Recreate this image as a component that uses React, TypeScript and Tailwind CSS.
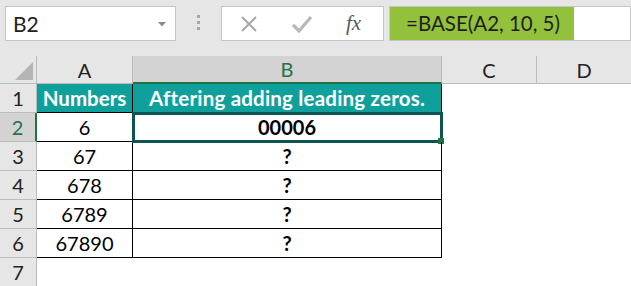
const font = { fontFamily: "Lato, 'Open Sans', sans-serif" };

const rows = [
  { a: "6", b: "00006" },
  { a: "67", b: "?" },
  { a: "678", b: "?" },
  { a: "6789", b: "?" },
  { a: "67890", b: "?" },
];

function FormulaBar() {
  return (
    <div className="flex h-[56px] items-start bg-[#e6e6e6] pt-[6px]">
      {/* name box */}
      <div className="ml-[5px] flex h-[35px] w-[171px] items-center justify-between border border-[#c6c6c6] bg-white pl-[7px] pr-[9px]">
        <span className="text-[21px] text-[#222]">B2</span>
        <svg width="8" height="5" viewBox="0 0 8 5" className="mt-[1px]">
          <path d="M0 0 H8 L4 4.5 Z" fill="#8a8a8a" />
        </svg>
      </div>
      <div className="flex w-[45px] flex-col items-center gap-[3px] pt-[9px]">
        <span className="h-[3px] w-[3px] bg-[#a6a6a6]" />
        <span className="h-[3px] w-[3px] bg-[#a6a6a6]" />
        <span className="h-[3px] w-[3px] bg-[#a6a6a6]" />
      </div>
      {/* cancel / enter / fx */}
      <div className="flex h-[35px] w-[163px] items-center border border-[#c6c6c6] bg-white">
        <svg width="18" height="18" viewBox="0 0 18 18" className="ml-[18px]">
          <path d="M2 2 L16 16 M16 2 L2 16" stroke="#a8a8a8" strokeWidth="2" />
        </svg>
        <svg width="20" height="18" viewBox="0 0 20 18" className="ml-[34px]">
          <path d="M1 10 L7 16 L19 2" stroke="#b8b8b8" strokeWidth="3.2" fill="none" />
        </svg>
        <span
          className="ml-[34px] text-[21px] italic text-[#5a5a5a]"
          style={{ fontFamily: "'Liberation Serif', serif" }}
        >
          fx
        </span>
      </div>
      <div className="ml-[5px] flex h-[35px] flex-1 border border-[#c6c6c6] bg-white">
        <div className="flex w-[184px] items-center bg-[#93c13c] pl-[16px] text-[20.5px] text-[#1f1f1f]">
          =BASE(A2, 10, 5)
        </div>
      </div>
    </div>
  );
}

export default function App() {
  return (
    <div className="h-[286px] w-[631px] overflow-hidden bg-white" style={font}>
      <FormulaBar />
      <div className="grid grid-cols-[37px_96px_309px_95px_1fr] grid-rows-[28px_29px_29px_29px_29px_29px_29px_29px]">
        {/* column headers */}
        <div className="relative border-r border-b border-[#bcbcbc] bg-[#e6e6e6]">
          <svg width="18" height="18" viewBox="0 0 18 18" className="absolute bottom-[3px] right-[3px]">
            <path d="M18 0 L18 18 L0 18 Z" fill="#b4b4b4" />
          </svg>
        </div>
        <div className="flex items-center justify-center border-r border-b border-[#bcbcbc] bg-[#e6e6e6] text-[20px] text-[#222]">
          A
        </div>
        <div className="flex items-center justify-center border-r border-[#bcbcbc] border-b-2 border-b-[#217346] bg-[#d3d3d3] text-[20px] text-[#217346]">
          B
        </div>
        <div className="flex items-center justify-center border-r border-b border-[#bcbcbc] bg-[#e6e6e6] text-[20px] text-[#222]">
          C
        </div>
        <div className="flex items-center justify-center border-b border-[#bcbcbc] bg-[#e6e6e6] text-[20px] text-[#222]">
          D
        </div>

        {/* row 1 */}
        <div className="flex items-center justify-center border-r border-b border-[#bcbcbc] bg-[#e6e6e6] text-[20px] text-[#222]">
          1
        </div>
        <div className="flex items-center justify-center border-r border-b border-black bg-[#10a09b] text-[20.5px] font-bold text-white">
          Numbers
        </div>
        <div className="flex items-center justify-center border-r border-b border-black bg-[#10a09b] text-[20.5px] font-bold tracking-[0.2px] text-white">
          Aftering adding leading zeros.
        </div>
        <div />
        <div />

        {rows.map((r, i) => {
          const selected = i === 0;
          return (
            <div key={i} className="contents">
              <div
                className={
                  selected
                    ? "flex items-center justify-center border-b border-[#bcbcbc] border-r-2 border-r-[#217346] bg-[#d3d3d3] text-[20px] text-[#217346]"
                    : "flex items-center justify-center border-r border-b border-[#bcbcbc] bg-[#e6e6e6] text-[20px] text-[#222]"
                }
              >
                {i + 2}
              </div>
              <div className="flex items-center justify-center border-r border-b border-black text-[20px] text-black">
                {r.a}
              </div>
              <div className="relative flex items-center justify-center border-r border-b border-black text-[20px] font-bold text-black">
                {r.b}
                {selected && (
                  <div className="absolute -top-[1px] -left-[1px] -right-[2px] -bottom-[2px] border-[3px] border-[#0e5451]">
                    <span className="absolute -bottom-[4px] -right-[4px] h-[6px] w-[6px] bg-[#217346]" />
                  </div>
                )}
              </div>
              <div />
              <div />
            </div>
          );
        })}

        {/* row 7 */}
        <div className="flex items-center justify-center border-r border-b border-[#bcbcbc] bg-[#e6e6e6] text-[20px] text-[#222]">
          7
        </div>
        <div />
        <div />
        <div />
        <div />
      </div>
    </div>
  );
}
